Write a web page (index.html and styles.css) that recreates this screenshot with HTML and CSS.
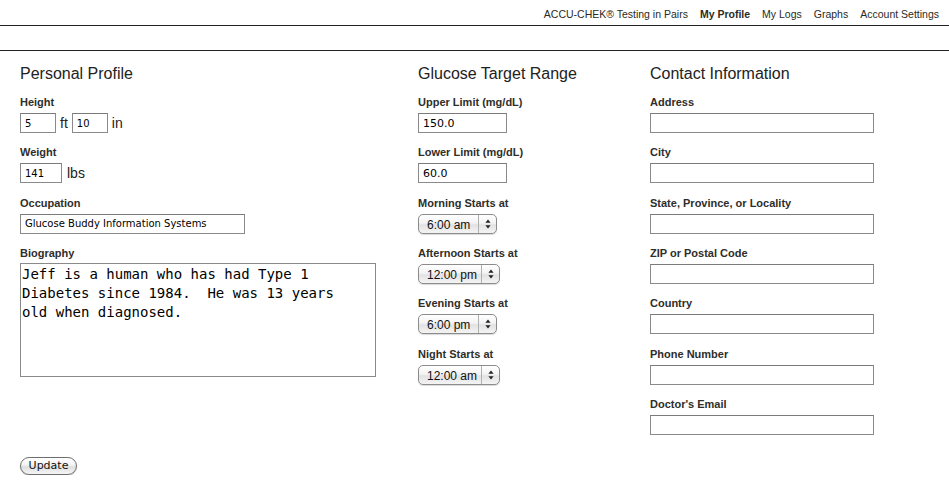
FILE: index.html
```html
<!DOCTYPE html>
<html lang="en">
<head>
<meta charset="utf-8">
<title>My Profile</title>
<link rel="stylesheet" href="styles.css">
</head>
<body>
<header class="topnav">
  <nav class="topnav-links">
    <a href="#">ACCU-CHEK® Testing in Pairs</a>
    <a href="#" class="active">My Profile</a>
    <a href="#">My Logs</a>
    <a href="#">Graphs</a>
    <a href="#">Account Settings</a>
  </nav>
</header>
<div class="subbar"></div>
<main class="page">
  <form class="profile-form">
    <div class="columns">
      <section class="col">
        <h2>Personal Profile</h2>
        <div class="field">
          <label>Height</label>
          <div class="inline">
            <input class="in-small w36" type="text" value="5">
            <span class="unit">ft</span>
            <input class="in-small w36" type="text" value="10">
            <span class="unit">in</span>
          </div>
        </div>
        <div class="field">
          <label>Weight</label>
          <div class="inline">
            <input class="in-small w42" type="text" value="141">
            <span class="unit unit-wide">lbs</span>
          </div>
        </div>
        <div class="field">
          <label>Occupation</label>
          <input class="in-small w225" type="text" value="Glucose Buddy Information Systems">
        </div>
        <div class="field">
          <label>Biography</label>
          <textarea class="bio">Jeff is a human who has had Type 1 Diabetes since 1984.  He was 13 years old when diagnosed.</textarea>
        </div>
      </section>

      <section class="col">
        <h2>Glucose Target Range</h2>
        <div class="field">
          <label>Upper Limit (mg/dL)</label>
          <input class="in-med w89" type="text" value="150.0">
        </div>
        <div class="field">
          <label>Lower Limit (mg/dL)</label>
          <input class="in-med w89" type="text" value="60.0">
        </div>
        <div class="field">
          <label>Morning Starts at</label>
          <div class="select w79">
            <select><option>6:00 am</option></select>
            <span class="select-arrows"><svg width="6" height="10" viewBox="0 0 6 10"><path d="M3 0.5 L5.6 3.8 H0.4 Z M3 9.5 L5.6 6.2 H0.4 Z" fill="#222"/></svg></span>
          </div>
        </div>
        <div class="field">
          <label>Afternoon Starts at</label>
          <div class="select w82">
            <select><option>12:00 pm</option></select>
            <span class="select-arrows"><svg width="6" height="10" viewBox="0 0 6 10"><path d="M3 0.5 L5.6 3.8 H0.4 Z M3 9.5 L5.6 6.2 H0.4 Z" fill="#222"/></svg></span>
          </div>
        </div>
        <div class="field">
          <label>Evening Starts at</label>
          <div class="select w79">
            <select><option>6:00 pm</option></select>
            <span class="select-arrows"><svg width="6" height="10" viewBox="0 0 6 10"><path d="M3 0.5 L5.6 3.8 H0.4 Z M3 9.5 L5.6 6.2 H0.4 Z" fill="#222"/></svg></span>
          </div>
        </div>
        <div class="field">
          <label>Night Starts at</label>
          <div class="select w82">
            <select><option>12:00 am</option></select>
            <span class="select-arrows"><svg width="6" height="10" viewBox="0 0 6 10"><path d="M3 0.5 L5.6 3.8 H0.4 Z M3 9.5 L5.6 6.2 H0.4 Z" fill="#222"/></svg></span>
          </div>
        </div>
      </section>

      <section class="col">
        <h2>Contact Information</h2>
        <div class="field"><label>Address</label><input class="in-med w224" type="text"></div>
        <div class="field"><label>City</label><input class="in-med w224" type="text"></div>
        <div class="field"><label>State, Province, or Locality</label><input class="in-med w224" type="text"></div>
        <div class="field"><label>ZIP or Postal Code</label><input class="in-med w224" type="text"></div>
        <div class="field"><label>Country</label><input class="in-med w224" type="text"></div>
        <div class="field"><label>Phone Number</label><input class="in-med w224" type="text"></div>
        <div class="field"><label>Doctor's Email</label><input class="in-med w224" type="text"></div>
      </section>
    </div>
    <div class="actions">
      <button type="button" class="btn">Update</button>
    </div>
  </form>
</main>
</body>
</html>
```

FILE: styles.css
```css
html, body {
  margin: 0;
  padding: 0;
  background: #fff;
}

body {
  font-family: "Liberation Sans", Arial, Helvetica, sans-serif;
  color: #222;
}

.topnav {
  height: 25px;
  border-bottom: 1px solid #222;
  display: flex;
  justify-content: flex-end;
  align-items: flex-end;
  box-sizing: content-box;
}

.topnav-links {
  display: flex;
  gap: 12px;
  padding: 0 10px 4px 0;
}

.topnav-links a {
  font-size: 10.5px;
  line-height: 13px;
  color: #2a2a1e;
  text-decoration: none;
}

.topnav-links a.active {
  font-weight: bold;
}

.subbar {
  height: 24px;
  border-bottom: 1px solid #222;
}

.page {
  padding: 0 20px;
}

.columns {
  display: grid;
  grid-template-columns: 398px 232px 1fr;
}

.col h2 {
  font-size: 16px;
  line-height: 20px;
  font-weight: normal;
  color: #222;
  margin: 13px 0 11px;
}

.field {
  margin-bottom: 12.33px;
}

.col .field:last-child {
  margin-bottom: 0;
}

.field label {
  display: block;
  font-size: 11px;
  line-height: 14px;
  font-weight: bold;
  color: #2e2e2a;
  margin-bottom: 4px;
}

.inline {
  display: flex;
  align-items: center;
  gap: 4px;
  height: 20px;
}

.unit {
  font-size: 14px;
  color: #222;
}

.unit-wide {
  margin-left: 1px;
}

input[type="text"] {
  box-sizing: border-box;
  height: 20px;
  border: 1px solid #8a8a8a;
  border-top-color: #7a7a7a;
  padding: 0 4px;
  margin: 0;
  display: block;
  color: #000;
  background: #fff;
  outline: none;
}

.in-small {
  font-family: "DejaVu Sans", "Open Sans", sans-serif;
  font-size: 10px;
}

.in-med {
  font-family: "DejaVu Sans", "Open Sans", sans-serif;
  font-size: 11px;
}

.w36 { width: 36px; }
.w42 { width: 42px; }
.w225 { width: 225px; }
.w89 { width: 89px; }
.w224 { width: 224px; }
.w79 { width: 79px; }
.w82 { width: 82px; }

.bio {
  display: block;
  box-sizing: border-box;
  width: 356px;
  height: 114px;
  margin: -1px 0 0;
  border: 1px solid #8a8a8a;
  padding: 1px 16px 0 1px;
  font-family: "DejaVu Sans Mono", "Liberation Mono", monospace;
  font-size: 14px;
  line-height: 19px;
  color: #000;
  resize: none;
  outline: none;
  overflow: hidden;
}

.select {
  position: relative;
  box-sizing: border-box;
  height: 20px;
  border: 1px solid #8c8c8c;
  border-radius: 5px;
  background: linear-gradient(#ffffff 0%, #f3f3f3 45%, #e2e2e2 55%, #f4f4f4 100%);
  box-shadow: 0 1px 1px rgba(0,0,0,0.15);
}

.select select {
  -webkit-appearance: none;
  appearance: none;
  border: 0;
  background: transparent;
  width: 100%;
  height: 18px;
  margin: 0;
  padding: 0 0 0 8px;
  font-family: "Liberation Sans", Arial, sans-serif;
  font-size: 12px;
  color: #111;
  outline: none;
}

.select-arrows {
  position: absolute;
  top: 0;
  right: 0;
  bottom: 0;
  width: 17px;
  border-left: 1px solid #b0b0b0;
  display: flex;
  align-items: center;
  justify-content: center;
  pointer-events: none;
}

.actions {
  margin-top: 20px;
}

.btn {
  box-sizing: border-box;
  width: 57px;
  height: 18px;
  padding: 0;
  border: 1px solid #6e6e6e;
  border-radius: 9px;
  background: linear-gradient(#ffffff 0%, #f2f2f2 45%, #dedede 55%, #f6f6f6 100%);
  box-shadow: 0 1px 1px rgba(0,0,0,0.2);
  font-family: "DejaVu Sans", "Liberation Sans", sans-serif;
  font-size: 11px;
  line-height: 16px;
  color: #111;
}
```
